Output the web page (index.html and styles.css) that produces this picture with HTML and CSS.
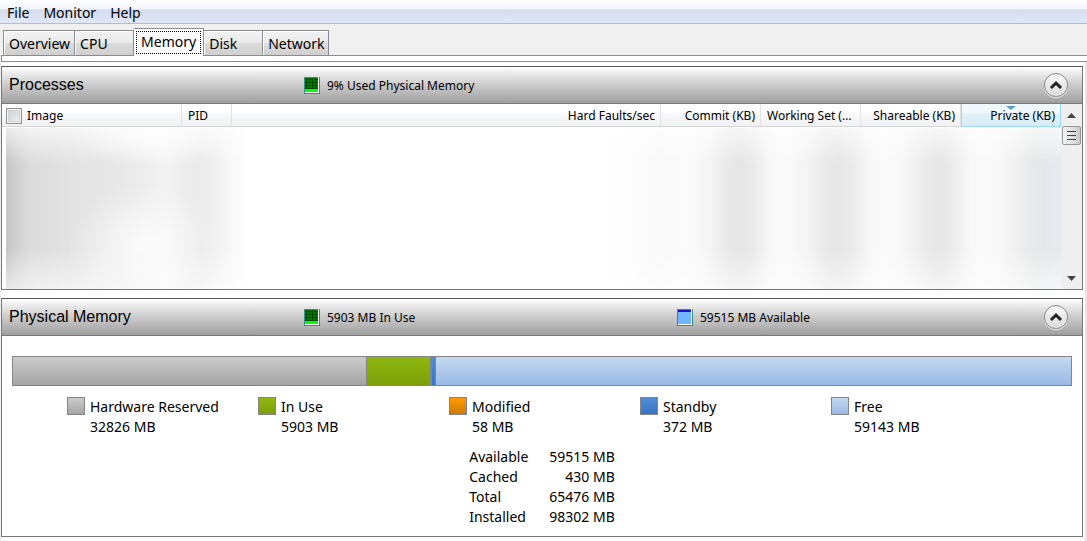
FILE: index.html
```
<!DOCTYPE html>
<html lang="en">

<head>
    <meta charset="UTF-8">
    <meta name="viewport" content="width=device-width, initial-scale=1.0">
    <title>Resource Monitor</title>
    <link rel="stylesheet" href="styles.css">
</head>

<body>

    <nav class="menu">
        <button type="button">File</button>
        <button type="button">Monitor</button>
        <button type="button">Help</button>
    </nav>

    <div class="tabs" role="tablist">
        <button type="button" role="tab" class="tab">Overview</button>
        <button type="button" role="tab" class="tab">CPU</button>
        <button type="button" role="tab" class="tab active" aria-selected="true"><span>Memory</span></button>
        <button type="button" role="tab" class="tab">Disk</button>
        <button type="button" role="tab" class="tab">Network</button>
    </div>
    <div class="tab-edge"></div>

    <main class="content">

        <!-- processes -->
        <section class="panel">
            <header class="panel-head">
                <h2>Processes</h2>
                <div class="stat">
                    <svg class="meter" viewBox="0 0 16 17">
                        <rect width="16" height="17" fill="#2f8f8f"/>
                        <path d="M1 15h13V0h1v16H1z" fill="#fff"/>
                        <rect x="1" y="1" width="13" height="14" fill="#008000"/>
                        <path d="M1 2.5h13M1 5.5h13M1 8.5h13M1 11.5h13M2.5 1v11M5.5 1v11M8.5 1v11M11.5 1v11" stroke="#004800"/>
                        <rect x="1" y="12" width="13" height="3" fill="#00ff00"/>
                    </svg>
                    <span>9% Used Physical Memory</span>
                </div>
                <div class="stat"></div>
                <button type="button" class="collapse" aria-label="Collapse Processes">
                    <svg viewBox="0 0 14 10"><path d="M2 8l5-5 5 5" fill="none" stroke="#222" stroke-width="3"/></svg>
                </button>
            </header>

            <div class="list">
                <table class="processes">
                    <colgroup>
                        <col class="c-image">
                        <col class="c-pid">
                        <col>
                        <col class="c-num">
                        <col class="c-num">
                        <col class="c-num">
                        <col class="c-num">
                    </colgroup>
                    <thead>
                        <tr>
                            <th><label class="check"><input type="checkbox">Image</label></th>
                            <th>PID</th>
                            <th class="num">Hard Faults/sec</th>
                            <th class="num">Commit (KB)</th>
                            <th class="num">Working Set (KB)</th>
                            <th class="num">Shareable (KB)</th>
                            <th class="num sorted" aria-sort="descending">Private (KB)</th>
                        </tr>
                    </thead>
                    <tbody>
                        <tr>
                            <td class="hidden-rows" colspan="7"><div class="haze"></div></td>
                        </tr>
                    </tbody>
                </table>

                <div class="scrollbar">
                    <button type="button" aria-label="Scroll up">
                        <svg viewBox="0 0 9 5"><path d="M0 5l4.5-5L9 5z" fill="#444"/></svg>
                    </button>
                    <div class="thumb"><i></i><i></i><i></i></div>
                    <button type="button" class="down" aria-label="Scroll down">
                        <svg viewBox="0 0 9 5"><path d="M0 0l4.5 5L9 0z" fill="#444"/></svg>
                    </button>
                </div>
            </div>
        </section>

        <!-- physical memory -->
        <section class="panel">
            <header class="panel-head">
                <h2>Physical Memory</h2>
                <div class="stat">
                    <svg class="meter" viewBox="0 0 16 17">
                        <rect width="16" height="17" fill="#2f8f8f"/>
                        <path d="M1 15h13V0h1v16H1z" fill="#fff"/>
                        <rect x="1" y="1" width="13" height="14" fill="#008000"/>
                        <path d="M1 2.5h13M1 5.5h13M1 8.5h13M1 11.5h13M2.5 1v11M5.5 1v11M8.5 1v11M11.5 1v11" stroke="#004800"/>
                        <rect x="1" y="12" width="13" height="3" fill="#00ff00"/>
                    </svg>
                    <span>5903 MB In Use</span>
                </div>
                <div class="stat">
                    <svg class="meter" viewBox="0 0 16 17">
                        <rect width="16" height="17" fill="#2f8f8f"/>
                        <path d="M1 15h13V0h1v16H1z" fill="#fff"/>
                        <rect x="1" y="1" width="13" height="14" fill="#73b4ff"/>
                        <rect x="1" y="1" width="13" height="2" fill="#1414c8"/>
                    </svg>
                    <span>59515 MB Available</span>
                </div>
                <button type="button" class="collapse" aria-label="Collapse Physical Memory">
                    <svg viewBox="0 0 14 10"><path d="M2 8l5-5 5 5" fill="none" stroke="#222" stroke-width="3"/></svg>
                </button>
            </header>

            <div class="memory">
                <!-- share of the 98302 MB installed -->
                <div class="bar">
                    <div class="reserved" style="width: 33.39%"></div>
                    <div class="in-use" style="width: 6%"></div>
                    <div class="modified" style="width: 0.06%"></div>
                    <div class="standby" style="width: 0.38%"></div>
                    <div class="free"></div>
                </div>

                <ul class="legend">
                    <li><i class="reserved"></i><span>Hardware Reserved<br>32826 MB</span></li>
                    <li><i class="in-use"></i><span>In Use<br>5903 MB</span></li>
                    <li><i class="modified"></i><span>Modified<br>58 MB</span></li>
                    <li><i class="standby"></i><span>Standby<br>372 MB</span></li>
                    <li><i class="free"></i><span>Free<br>59143 MB</span></li>
                </ul>

                <table class="totals">
                    <tr><th>Available</th><td>59515 MB</td></tr>
                    <tr><th>Cached</th><td>430 MB</td></tr>
                    <tr><th>Total</th><td>65476 MB</td></tr>
                    <tr><th>Installed</th><td>98302 MB</td></tr>
                </table>
            </div>
        </section>

    </main>

</body>

</html>
```

FILE: styles.css
```
* {
    box-sizing: border-box;
}

body {
    margin: 0;
    background-color: #f0f0f0;
    color: #000;
    font-family: "Noto Sans", "Open Sans", sans-serif;
    font-size: 14px;
}

button {
    margin: 0;
    padding: 0;
    border: 0;
    background: none;
    color: inherit;
    font: inherit;
}

.menu {
    height: 24px;
    padding: 2px 7px 0;
    display: flex;
    gap: 14px;
    border-bottom: 1px solid #b6bccc;
    background: linear-gradient(#fff, #f1f4fb 40%, #d5dcee 42%, #e0e7f7);
}

/* tabs */
.tabs {
    height: 31px;
    padding-left: 3px;
    display: flex;
    align-items: flex-end;
}

.tab {
    height: 25px;
    min-width: 59px;
    padding: 0 4px 0 5px;
    border: 1px solid #898c95;
    border-bottom: 0;
    border-left-width: 0;
    background: linear-gradient(#f2f2f2, #ebebeb 50%, #dcdcdc 52%, #cfcfcf);
    box-shadow: inset 1px 1px #fff;
    text-align: left;
}

.tab:first-child {
    border-left-width: 1px;
}

.tab.active {
    height: 28px;
    margin-bottom: -1px;
    padding: 2px;
    position: relative;
    background: #fff;
}

.tab.active span {
    height: 100%;
    padding: 0 4px 2px;
    display: flex;
    align-items: center;
    border: 1px dotted #000;
}

.tab-edge {
    height: 7px;
    border: 1px solid #898c95;
    border-right: 0;
    margin-left: 1px;
    background-color: #fff;
}

/* panels */
.content {
    min-height: calc(100vh - 62px);
    padding: 4px 2px 4px 0;
    margin-left: 1px;
    border-right: 2px solid #e4e4e4;
    background-color: #fff;
    display: flex;
    flex-direction: column;
    gap: 8px;
}

.panel {
    border: 1px solid #777;
    border-top-color: #555;
    background-color: #fff;
}

.panel-head {
    height: 37px;
    padding: 0 14px 0 7px;
    display: grid;
    grid-template-columns: 295px 373px 1fr 24px;
    align-items: center;
    border-bottom: 1px solid #7b7b7b;
    background: linear-gradient(#fdfdfd, #d0d0d0 45%, #9f9f9f);
}

.panel-head h2 {
    margin: 0;
    font-family: "Liberation Sans", Arial, sans-serif;
    font-size: 16px;
    font-weight: normal;
}

.stat {
    display: flex;
    align-items: center;
    gap: 7px;
    font-size: 12px;
}

.meter {
    width: 16px;
    height: 17px;
}

.collapse {
    width: 24px;
    height: 24px;
    display: flex;
    justify-content: center;
    align-items: center;
    border: 1px solid #8c8c8c;
    border-radius: 50%;
    background: linear-gradient(#fafafa, #dadada);
    box-shadow: inset 0 0 0 1px #eee, 0 1px #eee;
}

.collapse svg {
    width: 14px;
    height: 10px;
}

/* process list */
.list {
    display: flex;
}

.processes {
    flex: 1;
    width: 100%;
    table-layout: fixed;
    border-collapse: separate;
    border-spacing: 0;
    font-size: 12px;
}

.c-image {
    width: 180px;
}

.c-pid {
    width: 50px;
}

.c-num {
    width: 100px;
}

.processes th {
    height: 23px;
    padding: 2px 5px 0 6px;
    border-right: 1px solid #e0e2e4;
    border-bottom: 1px solid #d5d5d5;
    background: linear-gradient(#fff 40%, #f7f8fa 42%, #f1f2f4);
    font-weight: normal;
    line-height: 20px;
    text-align: left;
    white-space: nowrap;
    overflow: hidden;
    text-overflow: ellipsis;
}

.processes .num {
    text-align: right;
}

.processes .sorted {
    position: relative;
    border: 1px solid #96d9f9;
    border-top: 0;
    background: linear-gradient(#f2f9fc 40%, #e1f1f9 42%, #d8ecf6);
}

.sorted::before {
    content: "";
    position: absolute;
    top: 2px;
    left: 50%;
    margin-left: -5px;
    border: 5px solid transparent;
    border-top: 4px solid #5d9dbd;
    border-bottom: 0;
}

.check {
    display: flex;
    align-items: center;
    gap: 5px;
}

.check input {
    appearance: none;
    width: 16px;
    height: 16px;
    margin: 0 0 0 -2px;
    border: 1px solid #8e8f8f;
    background: linear-gradient(135deg, #c6cad1, #f6f6f6);
    box-shadow: inset 0 0 0 1px #f4f4f4, inset 0 0 0 2px #cfd1d4;
}

.hidden-rows {
    height: 162px;
    padding: 1px 0 0 4px;
}

/* smeared out process names and numbers */
.haze {
    height: 161px;
    background:
        linear-gradient(#fffa, #fff0 22%, #fff0 75%, #fff9),
        radial-gradient(ellipse 75px 62px at 137px 118px, #fffc, #fff0),
        radial-gradient(ellipse 80px 34px at 145px 4px, #fffc, #fff0),
        linear-gradient(to right, #c4c4c4, #d0d0d0 10px, #dcdcdc 24px, #e2e2e2 60px, #e9e9e9 120px, #f3f3f3 160px, #ededed 180px, #ebebeb 195px, #f0f0f0 208px, #f9f9f9 226px, #fff 245px, #fff0 246px),
        linear-gradient(to left, #e6eaf0, #e5e8ec 14px, #e7e8e9 26px, #f0f0f0 44px, #f8f8f8 62px, #fbfbfb 78px, #f8f8f8 90px, #ededed 106px, #e7e7e7 118px, #e7e7e7 128px, #eee 142px, #f7f7f7 158px, #fbfbfb 178px, #f7f7f7 192px, #eaeaea 210px, #e6e6e6 222px, #e8e8e8 234px, #f3f3f3 252px, #fbfbfb 276px, #f8f8f8 290px, #eaeaea 308px, #e6e6e6 320px, #e8e8e8 332px, #f4f4f4 350px, #fbfbfb 374px, #f9f9f9 404px, #fdfdfd 430px, #fff 460px);
}

.scrollbar {
    width: 21px;
    padding: 0 1px;
    display: flex;
    flex-direction: column;
    background-color: #efefef;
}

.scrollbar button {
    height: 22px;
    display: flex;
    justify-content: center;
    align-items: center;
}

.scrollbar .down {
    margin-top: auto;
}

.scrollbar svg {
    width: 9px;
    height: 5px;
}

.thumb {
    height: 19px;
    display: flex;
    flex-direction: column;
    justify-content: center;
    align-items: center;
    gap: 3px;
    border: 1px solid #979797;
    border-radius: 2px;
    background: linear-gradient(to right, #f5f5f5, #e4e4e4 50%, #c8c8c8);
}

.thumb i {
    width: 9px;
    height: 1px;
    background-color: #444;
}

/* physical memory */
.memory {
    padding: 20px 10px 9px;
}

.bar {
    height: 30px;
    display: flex;
    border: 1px solid #858585;
}

.bar div + div {
    border-left: 1px solid #858585;
}

.bar .free {
    flex: 1;
}

.reserved {
    background: linear-gradient(#cbcbcb, #a5a5a5);
}

.in-use {
    background: linear-gradient(#8fb80e, #7c9f0a);
}

.modified {
    background: linear-gradient(#ff9c00, #cc7a00);
}

.standby {
    background: linear-gradient(#538dd5, #3874c4);
}

.free {
    background: linear-gradient(#c5d9f1, #98b9e4);
}

.legend {
    margin: 11px 0 10px;
    padding: 0 50px 0 55px;
    display: grid;
    grid-template-columns: repeat(5, 1fr);
    list-style: none;
    line-height: 20px;
}

.legend li {
    display: flex;
    gap: 5px;
}

.legend i {
    width: 18px;
    height: 18px;
    border: 1px solid #858585;
}

.totals {
    margin: 0 auto;
    border-spacing: 0;
    line-height: 20px;
}

.totals th {
    padding: 0 21px 0 0;
    font-weight: normal;
    text-align: left;
}

.totals td {
    padding: 0;
    text-align: right;
}
```
